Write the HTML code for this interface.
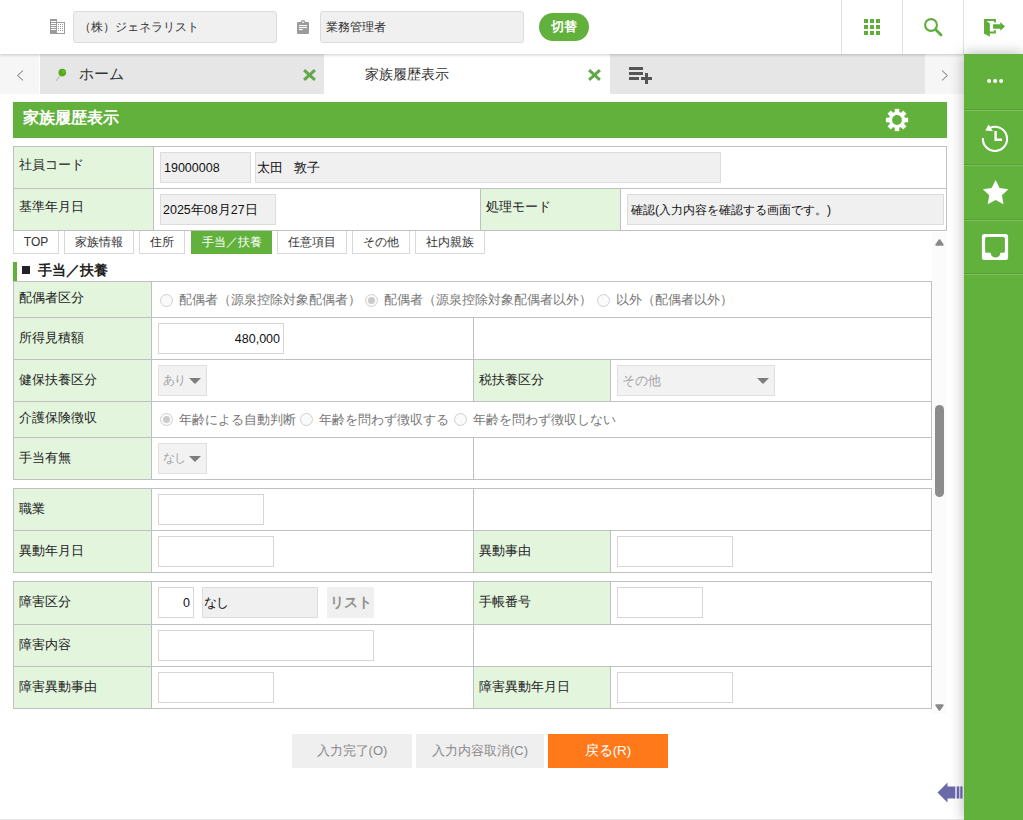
<!DOCTYPE html>
<html lang="ja">
<head>
<meta charset="utf-8">
<title>家族履歴表示</title>
<style>
*{box-sizing:border-box;margin:0;padding:0}
html,body{width:1023px;height:820px;overflow:hidden;background:#fff}
body{font-family:"Liberation Sans",sans-serif;font-size:13px;color:#222;position:relative}
.abs{position:absolute}
/* ---------- header ---------- */
#hdr{position:absolute;left:0;top:0;width:1023px;height:54px;background:#fff;z-index:5;box-shadow:0 1px 3px rgba(0,0,0,.2)}
.hin{position:absolute;top:11px;height:32px;background:#f0f0f0;border:1px solid #dcdcdc;border-radius:3px;font-size:12px;line-height:30px;padding-left:5px;color:#333}
#sw{position:absolute;left:539px;top:13px;width:50px;height:28px;border-radius:14px;background:#62b13c;color:#fff;font-size:13px;line-height:27px;text-align:center;font-weight:bold}
.vsep{position:absolute;top:0;width:1px;height:54px;background:#e2e2e2}
/* ---------- tab bar ---------- */
#tabbar{position:absolute;left:0;top:54px;width:964px;height:40px;background:#f6f6f6}
#tabbar .t{position:absolute;top:0;height:40px;font-size:14.5px;line-height:40px;color:#333}
/* ---------- side ---------- */
#side{position:absolute;left:964px;top:54px;width:59px;height:766px;background:#62b13c;z-index:6;box-shadow:0 0 13px rgba(0,0,0,.30)}
#side .top{position:absolute;left:0;top:0;width:59px;height:54px;background:#fff}
#side .ln{position:absolute;left:0;width:59px;height:1px;background:#7cc05c}
/* ---------- title ---------- */
#title{position:absolute;left:13px;top:102px;width:934px;height:36px;background:#62b13c;color:#fff;font-weight:bold;font-size:16px;line-height:31px;padding-left:10px}
/* ---------- tables ---------- */
.cell{position:absolute;border:1px solid #c4c4c4;background:#fff}
.lab{background:#e3f5dd}
.lab span{position:absolute;left:5px;top:9px;font-size:13px;line-height:16px;color:#222;white-space:nowrap}
.inp{position:absolute;height:31px;border:1px solid #d6d6d6;background:#fff;font-size:12.5px;line-height:30.5px;color:#111;white-space:nowrap}
.inp.g{background:#f0f0f0;border-color:#dcdcdc}
.stab{position:absolute;top:231px;height:23px;border:1px solid #d9d9d9;border-top:none;background:#fff;font-size:12px;line-height:20px;text-align:center;color:#333;white-space:nowrap;padding-top:1px}
.stab.on{background:#62b13c;border-color:#62b13c;color:#fff}
.rad{position:absolute;width:13px;height:13px;border-radius:50%;border:1px solid #d0d0d0;background:#fafafa}
.rad.on:after{content:"";position:absolute;left:2px;top:2px;width:7px;height:7px;border-radius:50%;background:#cbcbcb}
.rl{position:absolute;font-size:13px;line-height:16px;color:#777;white-space:nowrap}
.sel{position:absolute;height:31px;border:1px solid #e0e0e0;background:#f2f2f2;font-size:12px;line-height:29px;color:#a3a3a3;padding-left:4px;white-space:nowrap}
.sel:after{content:"";position:absolute;right:5px;top:12px;border-left:6px solid transparent;border-right:6px solid transparent;border-top:6px solid #7d7d7d}
.btn{position:absolute;top:734px;height:34px;font-size:13.5px;line-height:34px;text-align:center;background:#efefef;color:#8a8a8a}

.box{position:absolute;border:1px solid #bfc0bf;background:#fff}
.lb{position:absolute;background:#e3f5dd}
.lb span{position:absolute;left:5px;top:12px;font-size:13px;line-height:16px;color:#222;white-space:nowrap}
.hl{position:absolute;height:1px;background:#bfc0bf}
.vl{position:absolute;width:1px;background:#bfc0bf}
</style>
</head>
<body>

<!-- header -->
<div id="hdr">
  <svg class="abs" style="left:50px;top:19px" width="16" height="15" viewBox="0 0 16 15" shape-rendering="crispEdges">
    <rect x="0" y="0" width="7" height="15" fill="#9b9b9b"/>
    <g fill="#fff"><rect x="1" y="2" width="5" height="1"/><rect x="1" y="4" width="5" height="1"/><rect x="1" y="6" width="5" height="1"/><rect x="1" y="8" width="5" height="1"/><rect x="1" y="10" width="5" height="1"/></g>
    <rect x="7" y="3" width="8" height="12" fill="#9b9b9b"/><rect x="7" y="4" width="7" height="10" fill="#fff"/>
    <g fill="#9b9b9b"><rect x="8" y="5" width="1" height="1"/><rect x="10" y="5" width="1" height="1"/><rect x="12" y="5" width="1" height="1"/><rect x="8" y="7" width="1" height="1"/><rect x="10" y="7" width="1" height="1"/><rect x="12" y="7" width="1" height="1"/><rect x="8" y="9" width="1" height="1"/><rect x="10" y="9" width="1" height="1"/><rect x="12" y="9" width="1" height="1"/><rect x="8" y="11" width="1" height="1"/><rect x="10" y="11" width="1" height="1"/><rect x="12" y="11" width="1" height="1"/></g>
  </svg>
  <div class="hin" style="left:73px;width:204px">（株）ジェネラリスト</div>
  <svg class="abs" style="left:297px;top:20px" width="12" height="14" viewBox="0 0 12 14">
    <rect x="0" y="2" width="12" height="12" rx="1" fill="#9b9b9b"/>
    <path d="M3.6 3 V2.4 A2.4 2.4 0 0 1 8.4 2.4 V3 Z" fill="#9b9b9b"/>
    <circle cx="6" cy="2.1" r=".9" fill="#fff"/>
    <g fill="#fff"><rect x="2" y="5" width="8" height="1.1"/><rect x="2" y="7" width="8" height="1.1"/><rect x="2" y="9" width="3.8" height="1.1"/></g>
  </svg>
  <div class="hin" style="left:320px;width:204px;padding-left:5px">業務管理者</div>
  <div id="sw">切替</div>
  <div class="vsep" style="left:841px"></div>
  <div class="vsep" style="left:902px"></div>
  <!-- grid icon -->
  <svg class="abs" style="left:864px;top:19px" width="16" height="16" viewBox="0 0 16 16" fill="#5fae3a">
    <rect x="0" y="0" width="4" height="4"/><rect x="6" y="0" width="4" height="4"/><rect x="12" y="0" width="4" height="4"/>
    <rect x="0" y="6" width="4" height="4"/><rect x="6" y="6" width="4" height="4"/><rect x="12" y="6" width="4" height="4"/>
    <rect x="0" y="12" width="4" height="4"/><rect x="6" y="12" width="4" height="4"/><rect x="12" y="12" width="4" height="4"/>
  </svg>
  <!-- search icon -->
  <svg class="abs" style="left:922px;top:16px" width="22" height="22" viewBox="0 0 22 22">
    <circle cx="9" cy="9" r="5.9" fill="none" stroke="#5fae3a" stroke-width="2.1"/>
    <line x1="13.6" y1="13.6" x2="19" y2="19" stroke="#5fae3a" stroke-width="2.8" stroke-linecap="round"/>
  </svg>
  <div class="vsep" style="left:963px"></div>
  <!-- logout icon -->
  <svg class="abs" style="left:983px;top:18px" width="24" height="20" viewBox="0 0 24 20" fill="#5fae3a">
    <path d="M1 1.1 H12.9 V4.6 H10.9 V3.1 H3 V13.6 H10.9 V12.2 H12.9 V15.6 H1 Z"/>
    <path d="M1 1.1 L6.9 5.4 V18.8 L1 15.6 Z"/>
    <path d="M10.1 6.2 H17.3 V4.1 L22 8.4 L17.3 12.7 V10.7 H10.1 Z"/>
  </svg>
</div>

<!-- tab bar -->
<div id="tabbar">
  <div class="t" style="left:39px;width:1px;background:#fff"></div>
  <div class="t" style="left:40px;width:284px;background:#e6e6e6"></div>
  <div class="t" style="left:324px;width:286px;background:#fff"></div>
  <div class="t" style="left:610px;width:315px;background:#e6e6e6"></div>
  <svg class="abs" style="left:15px;top:14.5px" width="10" height="13" viewBox="0 0 10 13"><path d="M8 1.6 L2.6 6.5 L8 11.4" fill="none" stroke="#6e6e6e" stroke-width="1"/></svg>
  <svg class="abs" style="left:54px;top:13px" width="14" height="15" viewBox="0 0 14 15"><line x1="2.2" y1="13.8" x2="6" y2="8.6" stroke="#b9b9b9" stroke-width="1.1"/><circle cx="8.3" cy="5.6" r="3.8" fill="#55ab16"/><circle cx="9.3" cy="4.6" r="1.6" fill="#6cc22a" opacity=".7"/></svg>
  <div class="t" style="left:79px">ホーム</div>
  <svg class="abs" style="left:302px;top:14px" width="15" height="14" viewBox="0 0 15 14"><path d="M2.1 2.1 L12.9 11.9 M12.9 2.1 L2.1 11.9" fill="none" stroke="#62a84a" stroke-width="3"/></svg>
  <div class="t" style="left:365px;font-size:14px">家族履歴表示</div>
  <svg class="abs" style="left:587px;top:14px" width="15" height="14" viewBox="0 0 15 14"><path d="M2.1 2.1 L12.9 11.9 M12.9 2.1 L2.1 11.9" fill="none" stroke="#62a84a" stroke-width="3"/></svg>
  <svg class="abs" style="left:629px;top:13px" width="24" height="18" viewBox="0 0 24 18" fill="#555" shape-rendering="crispEdges"><rect x="0" y="0" width="14" height="3"/><rect x="0" y="5" width="14" height="3"/><rect x="0" y="10" width="10" height="3"/><rect x="12" y="10" width="11" height="3"/><rect x="16" y="6" width="3" height="11"/></svg>
  <svg class="abs" style="left:940px;top:14.5px" width="10" height="13" viewBox="0 0 10 13"><path d="M2 1.6 L7.4 6.5 L2 11.4" fill="none" stroke="#6e6e6e" stroke-width="1"/></svg>
</div>

<!-- sidebar -->
<div id="side">
  <div class="ln" style="top:55px;background:#55a032"></div><div class="ln" style="top:56px"></div>
  <div class="ln" style="top:110px;background:#55a032"></div><div class="ln" style="top:111px"></div>
  <div class="ln" style="top:165px;background:#55a032"></div><div class="ln" style="top:166px"></div>
  <div class="ln" style="top:219px;background:#55a032"></div><div class="ln" style="top:220px"></div>
  <!-- dots -->
  <svg class="abs" style="left:21px;top:24px" width="20" height="6" viewBox="0 0 20 6" fill="#fff"><circle cx="4.1" cy="3" r="2"/><circle cx="10.1" cy="3" r="2"/><circle cx="16.1" cy="3" r="2"/></svg>
  <!-- history -->
  <svg class="abs" style="left:16px;top:69px" width="30" height="30" viewBox="0 0 30 30">
    <path d="M9.8 4.9 A12.1 12.1 0 1 1 2.9 15.0" fill="none" stroke="#fff" stroke-width="2.1"/>
    <path d="M5.3 7.4 L8.6 1.4 L13.0 8.3 Z" fill="#fff"/>
    <path d="M15.6 7.9 V16.8 H22" fill="none" stroke="#fff" stroke-width="2.4"/>
  </svg>
  <!-- star -->
  <svg class="abs" style="left:16px;top:124px" width="30" height="30" viewBox="0 0 30 30"><polygon points="15.60,1.90 19.54,9.88 28.34,11.16 21.97,17.37 23.48,26.14 15.60,22.00 7.72,26.14 9.23,17.37 2.86,11.16 11.66,9.88" fill="#fff"/></svg>
  <!-- inbox -->
  <svg class="abs" style="left:16px;top:178px" width="30" height="30" viewBox="0 0 30 30">
    <path fill-rule="evenodd" fill="#fff" d="M4.4 1.9 H25.6 A2.5 2.5 0 0 1 28.1 4.4 V25.6 A2.5 2.5 0 0 1 25.6 28.1 H4.4 A2.5 2.5 0 0 1 1.9 25.6 V4.4 A2.5 2.5 0 0 1 4.4 1.9 Z M6.6 4.9 A1.5 1.5 0 0 0 5.1 6.4 V19.3 A1.5 1.5 0 0 0 6.6 20.8 H10.7 A4.8 4.8 0 0 0 20.3 20.8 H23.4 A1.5 1.5 0 0 0 24.9 19.3 V6.4 A1.5 1.5 0 0 0 23.4 4.9 Z"/>
  </svg>
</div>

<!-- title -->
<div id="title">家族履歴表示</div>
<svg class="abs" style="left:885px;top:108px" width="24" height="24" viewBox="0 0 24 24"><circle cx="12" cy="12" r="8.2" fill="#fff"/><rect x="9.7" y="0.9000000000000004" width="4.6" height="6" fill="#fff" transform="rotate(0 12 12)"/><rect x="9.7" y="0.9000000000000004" width="4.6" height="6" fill="#fff" transform="rotate(45 12 12)"/><rect x="9.7" y="0.9000000000000004" width="4.6" height="6" fill="#fff" transform="rotate(90 12 12)"/><rect x="9.7" y="0.9000000000000004" width="4.6" height="6" fill="#fff" transform="rotate(135 12 12)"/><rect x="9.7" y="0.9000000000000004" width="4.6" height="6" fill="#fff" transform="rotate(180 12 12)"/><rect x="9.7" y="0.9000000000000004" width="4.6" height="6" fill="#fff" transform="rotate(225 12 12)"/><rect x="9.7" y="0.9000000000000004" width="4.6" height="6" fill="#fff" transform="rotate(270 12 12)"/><rect x="9.7" y="0.9000000000000004" width="4.6" height="6" fill="#fff" transform="rotate(315 12 12)"/><circle cx="12" cy="12" r="4.9" fill="#62b13c"/></svg>

<div id="main">
<!-- ===== info table A ===== -->
<div class="box" style="left:13px;top:146px;width:934px;height:85px"></div>
<div class="lb" style="left:14px;top:147px;width:139px;height:41px"><span style="top:10px">社員コード</span></div>
<div class="lb" style="left:14px;top:189px;width:139px;height:41px"><span style="top:10px">基準年月日</span></div>
<div class="lb" style="left:481px;top:189px;width:139px;height:41px"><span style="top:10px">処理モード</span></div>
<div class="hl" style="left:13px;top:188px;width:934px"></div>
<div class="vl" style="left:153px;top:146px;height:85px"></div>
<div class="vl" style="left:480px;top:188px;height:43px"></div>
<div class="vl" style="left:620px;top:188px;height:43px"></div>
<div class="inp g" style="left:160px;top:152px;width:91px;padding-left:3px">19000008</div>
<div class="inp g" style="left:255px;top:152px;width:466px;padding-left:1px;font-size:13px">太田&nbsp;&nbsp;&nbsp;敦子</div>
<div class="inp g" style="left:160px;top:194px;width:116px;padding-left:2px">2025年08月27日</div>
<div class="inp g" style="left:627px;top:194px;width:317px;padding-left:3px;font-size:12.2px">確認(入力内容を確認する画面です。)</div>

<!-- ===== sub tabs ===== -->
<div class="stab" style="left:13px;width:46px">TOP</div>
<div class="stab" style="left:64px;width:70px">家族情報</div>
<div class="stab" style="left:139px;width:46px">住所</div>
<div class="stab on" style="left:191px;width:81px">手当／扶養</div>
<div class="stab" style="left:277px;width:70px">任意項目</div>
<div class="stab" style="left:352px;width:58px">その他</div>
<div class="stab" style="left:415px;width:70px">社内親族</div>

<!-- ===== section header ===== -->
<div class="abs" style="left:13px;top:262px;width:4px;height:19px;background:#62b13c"></div>
<div class="abs" style="left:22px;top:266px;width:8px;height:8px;background:#222"></div>
<div class="abs" style="left:38px;top:262px;font-size:14px;font-weight:bold;line-height:17px;color:#222;white-space:nowrap">手当／扶養</div>

<!-- ===== table 1 ===== -->
<div class="box" style="left:13px;top:281px;width:919px;height:199px"></div>
<div class="lb" style="left:14px;top:282px;width:137px;height:35px"><span style="top:8px">配偶者区分</span></div>
<div class="lb" style="left:14px;top:318px;width:137px;height:41px"><span>所得見積額</span></div>
<div class="lb" style="left:14px;top:360px;width:137px;height:41px"><span>健保扶養区分</span></div>
<div class="lb" style="left:474px;top:360px;width:136px;height:41px"><span>税扶養区分</span></div>
<div class="lb" style="left:14px;top:402px;width:137px;height:35px"><span style="top:8px">介護保険徴収</span></div>
<div class="lb" style="left:14px;top:438px;width:137px;height:41px"><span>手当有無</span></div>
<div class="hl" style="left:13px;top:317px;width:919px"></div>
<div class="hl" style="left:13px;top:359px;width:919px"></div>
<div class="hl" style="left:13px;top:401px;width:919px"></div>
<div class="hl" style="left:13px;top:437px;width:919px"></div>
<div class="vl" style="left:151px;top:281px;height:199px"></div>
<div class="vl" style="left:473px;top:317px;height:85px"></div>
<div class="vl" style="left:610px;top:359px;height:43px"></div>
<div class="vl" style="left:473px;top:437px;height:43px"></div>
<!-- row 1 radios -->
<div class="rad" style="left:160px;top:294px"></div><div class="rl" style="left:179px;top:292px">配偶者（源泉控除対象配偶者）</div>
<div class="rad on" style="left:365px;top:294px"></div><div class="rl" style="left:384px;top:292px">配偶者（源泉控除対象配偶者以外）</div>
<div class="rad" style="left:597px;top:294px"></div><div class="rl" style="left:616px;top:292px">以外（配偶者以外）</div>
<div class="inp" style="left:158px;top:323px;width:126px;text-align:right;padding-right:3px">480,000</div>
<div class="sel" style="left:158px;top:365px;width:49px;letter-spacing:-1px">あり</div>
<div class="sel" style="left:617px;top:365px;width:158px;font-size:13px">その他</div>
<!-- row 4 radios -->
<div class="rad on" style="left:160px;top:413px"></div><div class="rl" style="left:179px;top:412px">年齢による自動判断</div>
<div class="rad" style="left:300px;top:413px"></div><div class="rl" style="left:319px;top:412px">年齢を問わず徴収する</div>
<div class="rad" style="left:454px;top:413px"></div><div class="rl" style="left:473px;top:412px">年齢を問わず徴収しない</div>
<div class="sel" style="left:158px;top:443px;width:49px;letter-spacing:-1px">なし</div>

<!-- ===== table 2 ===== -->
<div class="box" style="left:13px;top:488px;width:919px;height:85px"></div>
<div class="lb" style="left:14px;top:489px;width:137px;height:41px"><span>職業</span></div>
<div class="lb" style="left:14px;top:531px;width:137px;height:41px"><span>異動年月日</span></div>
<div class="lb" style="left:474px;top:531px;width:136px;height:41px"><span>異動事由</span></div>
<div class="hl" style="left:13px;top:530px;width:919px"></div>
<div class="vl" style="left:151px;top:488px;height:85px"></div>
<div class="vl" style="left:473px;top:488px;height:85px"></div>
<div class="vl" style="left:610px;top:530px;height:43px"></div>
<div class="inp" style="left:158px;top:494px;width:106px"></div>
<div class="inp" style="left:158px;top:536px;width:116px"></div>
<div class="inp" style="left:617px;top:536px;width:116px"></div>

<!-- ===== table 3 ===== -->
<div class="box" style="left:13px;top:581px;width:919px;height:128px"></div>
<div class="lb" style="left:14px;top:582px;width:137px;height:42px"><span>障害区分</span></div>
<div class="lb" style="left:474px;top:582px;width:136px;height:42px"><span>手帳番号</span></div>
<div class="lb" style="left:14px;top:625px;width:137px;height:41px"><span>障害内容</span></div>
<div class="lb" style="left:14px;top:667px;width:137px;height:41px"><span>障害異動事由</span></div>
<div class="lb" style="left:474px;top:667px;width:136px;height:41px"><span>障害異動年月日</span></div>
<div class="hl" style="left:13px;top:624px;width:919px"></div>
<div class="hl" style="left:13px;top:666px;width:919px"></div>
<div class="vl" style="left:151px;top:581px;height:128px"></div>
<div class="vl" style="left:473px;top:581px;height:128px"></div>
<div class="vl" style="left:610px;top:581px;height:44px"></div>
<div class="vl" style="left:610px;top:666px;height:43px"></div>
<div class="inp" style="left:158px;top:587px;width:36px;text-align:right;padding-right:3px">0</div>
<div class="inp g" style="left:202px;top:587px;width:116px;padding-left:1px;font-size:12.5px;letter-spacing:-1.5px">なし</div>
<div class="abs" style="left:327px;top:587px;width:47px;height:31px;background:#f0f0f0;color:#909090;font-weight:bold;font-size:14px;line-height:31px;text-align:center">リスト</div>
<div class="inp" style="left:617px;top:587px;width:86px"></div>
<div class="inp" style="left:158px;top:630px;width:216px"></div>
<div class="inp" style="left:158px;top:672px;width:116px"></div>
<div class="inp" style="left:617px;top:672px;width:116px"></div>

<!-- ===== scrollbar ===== -->
<div class="abs" style="left:932px;top:232px;width:15px;height:482px;background:#fbfbfb"></div>
<svg class="abs" style="left:935px;top:239px" width="9" height="7" viewBox="0 0 9 7"><path d="M4.5 1.1 L7.8 5.8 L1.2 5.8 Z" fill="#888" stroke="#888" stroke-width="1.8" stroke-linejoin="round"/></svg>
<div class="abs" style="left:935px;top:405px;width:9px;height:92px;border-radius:5px;background:#8c8c8c"></div>
<svg class="abs" style="left:935px;top:704px" width="9" height="7" viewBox="0 0 9 7"><path d="M4.5 5.9 L7.8 1.2 L1.2 1.2 Z" fill="#888" stroke="#888" stroke-width="1.8" stroke-linejoin="round"/></svg>

<!-- ===== buttons ===== -->
<div class="btn" style="left:292px;width:120px;font-size:13px">入力完了(O)</div>
<div class="btn" style="left:416px;width:128px;font-size:13px">入力内容取消(C)</div>
<div class="btn" style="left:548px;width:120px;background:#ff791a;color:#fff">戻る(R)</div>

<!-- bottom-left arrow -->
<svg class="abs" style="left:937px;top:782px" width="26" height="21" viewBox="0 0 26 21">
  <path d="M0.5 10.5 L10.5 0.5 L10.5 4.5 L18 4.5 L18 16.5 L10.5 16.5 L10.5 20.5 Z" fill="#6a6aa8"/>
  <rect x="18" y="4.5" width="7.5" height="12" fill="#cfd0f0"/>
  <rect x="20" y="4.5" width="2" height="12" fill="#6a6aa8"/>
  <rect x="23.4" y="4.5" width="2" height="12" fill="#6a6aa8"/>
</svg>
<div class="abs" style="left:0;top:819px;width:964px;height:1px;background:#e6e6e6"></div>
</div>

</body>
</html>
